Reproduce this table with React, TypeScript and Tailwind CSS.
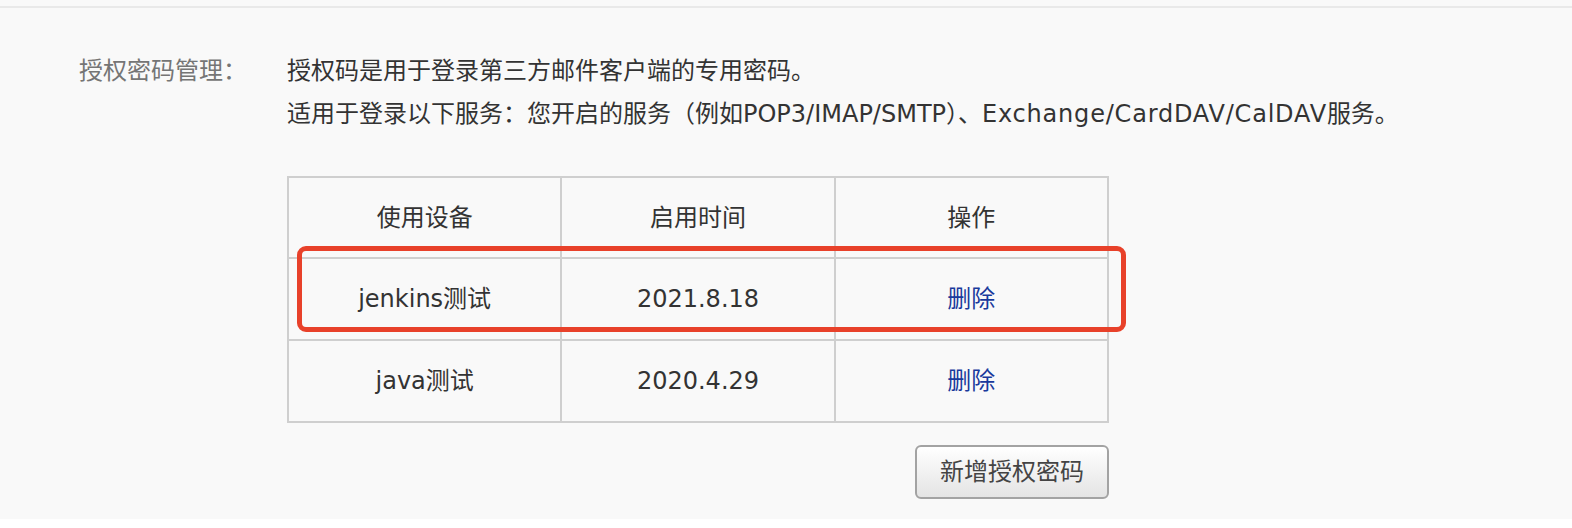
const rows = [
  { device: "jenkins测试", date: "2021.8.18" },
  { device: "java测试", date: "2020.4.29" },
];

export default function App() {
  return (
    <div
      className="min-h-[528px] bg-white text-[24px] text-[#333]"
      style={{ fontFamily: '"DejaVu Sans", "Noto Sans CJK SC", sans-serif' }}
    >
      <div className="h-[519px] bg-[#f9f9f9]">
        <div className="h-[6px]" />
        <div className="h-[2px] bg-[#e9e9e9]" />
        <div className="flex pl-[79px] pt-[42px]">
          <div className="w-[208px] shrink-0 leading-[43px] text-[#757575]">授权密码管理：</div>
          <div className="w-[822px]">
            <p className="leading-[43px]">授权码是用于登录第三方邮件客户端的专用密码。</p>
            <p className="whitespace-nowrap leading-[43px]">
              适用于登录以下服务：您开启的服务（例如POP3/IMAP/SMTP）、
              <span className="tracking-[0.8px]">Exchange/CardDAV/CalDAV</span>服务。
            </p>

            <div className="relative mt-[40px]">
              <table className="w-[822px] table-fixed border-collapse border-2 border-[#cfcfcf] text-center">
                <thead>
                  <tr className="h-[81px]">
                    <th className="border-2 border-[#cfcfcf] font-normal">使用设备</th>
                    <th className="border-2 border-[#cfcfcf] font-normal">启用时间</th>
                    <th className="border-2 border-[#cfcfcf] font-normal">操作</th>
                  </tr>
                </thead>
                <tbody>
                  {rows.map((row, i) => (
                    <tr key={i} className="h-[82px]">
                      <td className="border-2 border-[#cfcfcf]">{row.device}</td>
                      <td className="border-2 border-[#cfcfcf]">{row.date}</td>
                      <td className="border-2 border-[#cfcfcf]">
                        <a className="cursor-pointer text-[#1a3a9c]">删除</a>
                      </td>
                    </tr>
                  ))}
                </tbody>
              </table>
              {/* annotation box around the first row */}
              <div className="pointer-events-none absolute left-[10px] top-[70px] h-[86px] w-[829px] rounded-[9px] border-[5px] border-[#e8412a]" />
            </div>

            <div className="mt-[22px] flex justify-end">
              <button className="h-[54px] w-[194px] rounded-[6px] border-2 border-[#a3a3a3] bg-gradient-to-b from-white to-[#e4e4e4] text-[24px] text-[#444]">
                新增授权密码
              </button>
            </div>
          </div>
        </div>
      </div>
    </div>
  );
}
